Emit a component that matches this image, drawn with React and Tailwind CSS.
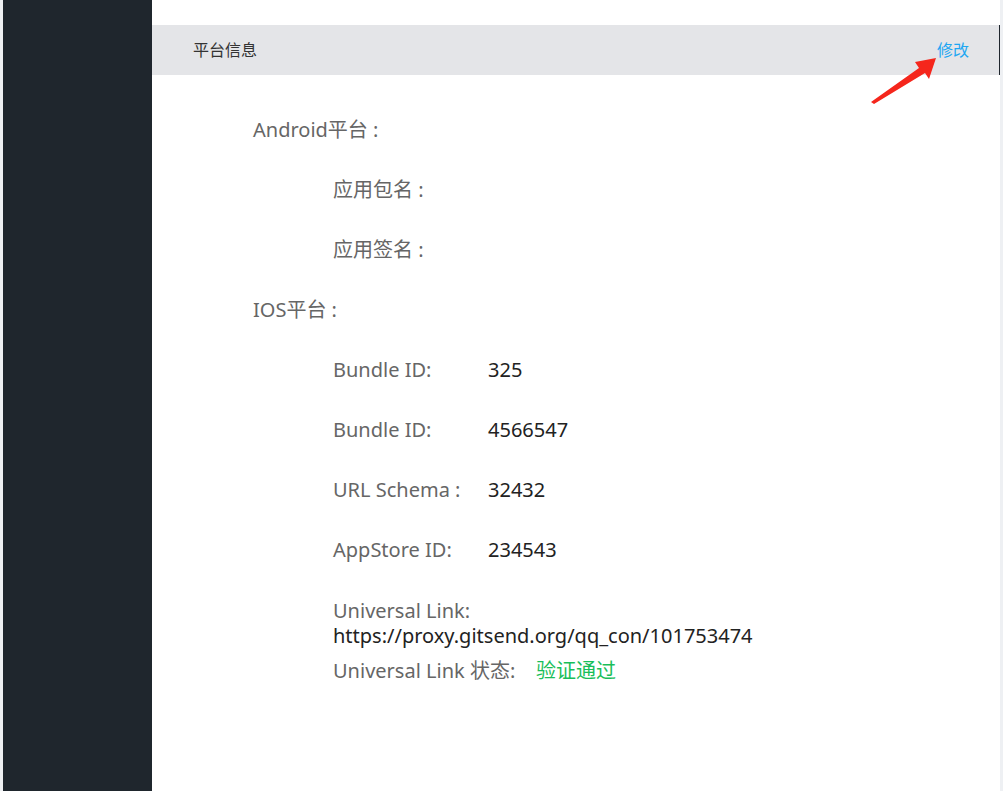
export default function App() {
  const font = { fontFamily: '"Noto Sans", "Noto Sans CJK SC", sans-serif' }

  return (
    <div className="flex h-[791px] w-[1003px] overflow-hidden bg-[#eef0f3]" style={font}>
      {/* sidebar */}
      <div className="ml-[3px] h-full w-[149px] shrink-0 bg-[#1f262d]"></div>

      {/* main */}
      <div className="relative flex h-full w-[848px] flex-col bg-white">
        <div className="h-[25px]"></div>
        <div className="flex h-[50px] items-center justify-between border-r border-[#1f262d] bg-[#e4e5e8] pl-[41px] pr-[30px]">
          <span className="text-[16px] text-[#333]">平台信息</span>
          <span className="text-[16px] text-[#1ea7f2]">修改</span>
        </div>

        {/* red arrow annotation */}
        <svg className="absolute left-[708px] top-[50px]" width="80" height="60" viewBox="0 0 80 60">
          <polygon points="11,52 59,18 55,12 76,8 69,29 65,23 14,54" fill="#f5261c" />
        </svg>

        <div className="mt-[25px] pl-[101px] text-[20px] text-[#666]">
          <div className="flex h-[60px] items-center">Android平台 :</div>
          <div className="flex h-[60px] items-center pl-[80px]">应用包名 :</div>
          <div className="flex h-[60px] items-center pl-[80px]">应用签名 :</div>
          <div className="flex h-[60px] items-center">IOS平台 :</div>
          <div className="flex h-[60px] items-center pl-[80px]">
            <span className="w-[155px]">Bundle ID:</span>
            <span className="text-[#222]">325</span>
          </div>
          <div className="flex h-[60px] items-center pl-[80px]">
            <span className="w-[155px]">Bundle ID:</span>
            <span className="text-[#222]">4566547</span>
          </div>
          <div className="flex h-[60px] items-center pl-[80px]">
            <span className="w-[155px]">URL Schema :</span>
            <span className="text-[#222]">32432</span>
          </div>
          <div className="flex h-[60px] items-center pl-[80px]">
            <span className="w-[155px]">AppStore ID:</span>
            <span className="text-[#222]">234543</span>
          </div>
          <div className="mt-[18px] pl-[80px] leading-[25px]">
            <div>Universal Link:</div>
            <div className="text-[#222]">https://proxy.gitsend.org/qq_con/101753474</div>
            <div className="mt-[10px] flex">
              <span className="w-[203px]">Universal Link 状态:</span>
              <span className="text-[#19be5a]">验证通过</span>
            </div>
          </div>
        </div>
      </div>
    </div>
  )
}
